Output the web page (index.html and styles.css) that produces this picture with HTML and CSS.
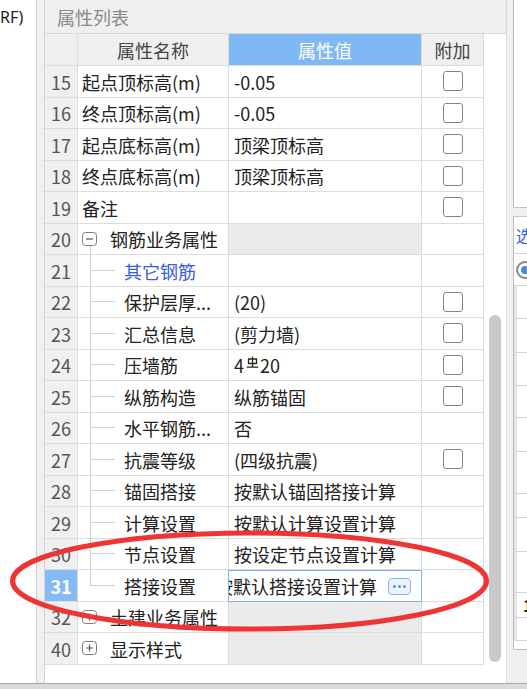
FILE: index.html
```html
<!DOCTYPE html>
<html lang="zh-CN">
<head>
<meta charset="utf-8">
<title>属性列表</title>
<link rel="stylesheet" href="styles.css">
</head>
<body>
<div class="screen">
  <div class="main">
    <div class="left-strip"><span class="rf">RF)</span></div>
    <div class="gutter"></div>
    <div class="panel">
      <div class="panel-title">属性列表</div>
      <div class="panel-body">
        <div class="grid">
          <div class="c num hd"></div>
          <div class="c hd">属性名称</div>
          <div class="c hd hd-val">属性值</div>
          <div class="c hd">附加</div>

          <div class="c num">15</div><div class="c name">起点顶标高(m)</div><div class="c val">-0.05</div><div class="c att"><span class="cb"></span></div>
          <div class="c num">16</div><div class="c name">终点顶标高(m)</div><div class="c val">-0.05</div><div class="c att"><span class="cb"></span></div>
          <div class="c num">17</div><div class="c name">起点底标高(m)</div><div class="c val">顶梁顶标高</div><div class="c att"><span class="cb"></span></div>
          <div class="c num">18</div><div class="c name">终点底标高(m)</div><div class="c val">顶梁顶标高</div><div class="c att"><span class="cb"></span></div>
          <div class="c num">19</div><div class="c name">备注</div><div class="c val"></div><div class="c att"><span class="cb"></span></div>

          <div class="c num">20</div>
          <div class="c name group open"><svg class="tog" width="16" height="15" viewBox="0 0 16 15"><rect x="0.5" y="0.5" width="14" height="13" rx="3" fill="#fff" stroke="#7c7c7c"/><path d="M4 7H11" stroke="#555" stroke-width="1.2"/></svg><span class="gtxt">钢筋业务属性</span></div>
          <div class="c val grey"></div><div class="c att"></div>

          <div class="c num">21</div><div class="c name child"><span class="blue">其它钢筋</span></div><div class="c val"></div><div class="c att"></div>
          <div class="c num">22</div><div class="c name child">保护层厚...</div><div class="c val">(20)</div><div class="c att"><span class="cb"></span></div>
          <div class="c num">23</div><div class="c name child">汇总信息</div><div class="c val">(剪力墙)</div><div class="c att"><span class="cb"></span></div>
          <div class="c num">24</div><div class="c name child">压墙筋</div><div class="c val">4<svg class="rebar" width="13" height="13" viewBox="0 0 13 13"><path d="M6.5 0.5V10.5M2.5 3H10.5V7.5H2.5ZM0.8 11.2H12.2" fill="none" stroke="#222" stroke-width="1.3"/></svg>20</div><div class="c att"><span class="cb"></span></div>
          <div class="c num">25</div><div class="c name child">纵筋构造</div><div class="c val">纵筋锚固</div><div class="c att"><span class="cb"></span></div>
          <div class="c num">26</div><div class="c name child">水平钢筋...</div><div class="c val">否</div><div class="c att"></div>
          <div class="c num">27</div><div class="c name child">抗震等级</div><div class="c val">(四级抗震)</div><div class="c att"><span class="cb"></span></div>
          <div class="c num">28</div><div class="c name child">锚固搭接</div><div class="c val">按默认锚固搭接计算</div><div class="c att"></div>
          <div class="c num">29</div><div class="c name child">计算设置</div><div class="c val">按默认计算设置计算</div><div class="c att"></div>
          <div class="c num">30</div><div class="c name child">节点设置</div><div class="c val">按设定节点设置计算</div><div class="c att"></div>
          <div class="c num sel">31</div><div class="c name child last">搭接设置</div>
          <div class="c val edit"><span class="edit-text">按默认搭接设置计算</span><span class="dots"><i></i><i></i><i></i></span></div><div class="c att"></div>

          <div class="c num">32</div>
          <div class="c name group"><svg class="tog" width="16" height="15" viewBox="0 0 16 15"><rect x="0.5" y="0.5" width="14" height="13" rx="3" fill="#fff" stroke="#7c7c7c"/><path d="M4 7H11M7.5 3.5V10.5" stroke="#555" stroke-width="1.2"/></svg><span class="gtxt">土建业务属性</span></div>
          <div class="c val grey"></div><div class="c att"></div>

          <div class="c num">40</div>
          <div class="c name group"><svg class="tog" width="16" height="15" viewBox="0 0 16 15"><rect x="0.5" y="0.5" width="14" height="13" rx="3" fill="#fff" stroke="#7c7c7c"/><path d="M4 7H11M7.5 3.5V10.5" stroke="#555" stroke-width="1.2"/></svg><span class="gtxt">显示样式</span></div>
          <div class="c val grey"></div><div class="c att"></div>
        </div>
        <div class="vscroll"><div class="thumb"></div></div>
      </div>
    </div>
    <div class="right-strip">
      <div class="rs-gap"></div>
      <div class="rs-col">
        <div class="rs-top"></div>
        <div class="rs-sep"></div>
        <div class="rs-box">
          <div class="rs-tab"><span class="rs-blue">选</span></div>
          <div class="rs-icon"><span class="rs-circle"></span></div>
          <div class="rs-row h33"></div>
          <div class="rs-row h34"><span class="rs-o">·</span></div>
          <div class="rs-row h33"><span class="rs-o">·</span></div>
          <div class="rs-row h32"></div>
          <div class="rs-row h34"><span class="rs-o">·</span></div>
          <div class="rs-row h42"><span class="rs-o">·</span></div>
          <div class="rs-row h24"><span class="rs-o">·</span></div>
          <div class="rs-row h34"><span class="rs-o">·</span></div>
          <div class="rs-row h41"><span class="rs-o">·</span></div>
          <div class="rs-row h25"><span class="rs-k">1</span></div>
          <div class="rs-row h23"><span class="rs-k">·</span></div>
        </div>
      </div>
    </div>
  </div>
  <div class="bottom-bar"></div>
</div>
<svg class="annot" width="527" height="689" viewBox="0 0 527 689"><ellipse cx="249.5" cy="581" rx="237" ry="48" fill="none" stroke="#ef3434" stroke-width="5"/></svg>
</body>
</html>
```

FILE: styles.css
```css
* { box-sizing: border-box; }
html, body { margin: 0; padding: 0; }
body {
  width: 527px;
  height: 689px;
  overflow: hidden;
  position: relative;
  background: #f0f0f0;
  font-family: "Noto Sans CJK SC", "Noto Sans", sans-serif;
}
.screen { display: flex; flex-direction: column; height: 689px; }
.main { display: flex; height: 683px; }
.bottom-bar { height: 6px; border-top: 1px solid #a9a9a9; background: #dadada; }

.left-strip {
  width: 37px;
  background: #fff;
  border-right: 1px solid #cdcdcd;
  padding-top: 6px;
  font-family: "Noto Sans", sans-serif;
  font-size: 16px;
  color: #222;
  overflow: hidden;
}
.gutter { width: 7px; background: #f0f0f0; }

.panel {
  width: 463px;
  border-left: 1px solid #d2d2d2;
  border-right: 1px solid #d8d8d8;
  display: flex;
  flex-direction: column;
  background: #fff;
}
.panel-title {
  height: 34px;
  flex: none;
  background: #efefef;
  border-bottom: 1px solid #d9d9d9;
  padding-left: 12px;
  color: #8a8a8a;
  font-size: 18px;
  display: flex;
  align-items: center;
}
.panel-body { flex: 1; display: flex; }

.grid {
  width: 439px;
  display: grid;
  grid-template-columns: 33px 151px 193px 62px;
  grid-template-rows: 32px;
  grid-auto-rows: 31.5px;
  align-content: start;
}
.c {
  border-right: 1px solid #dcdcdc;
  border-bottom: 1px solid #dcdcdc;
  display: flex;
  align-items: center;
  font-size: 18px;
  color: #222;
  white-space: nowrap;
  overflow: hidden;
  padding-top: 1px;
}
.num { background: #f0f0f0; justify-content: center; color: #555; }
.num.sel { background: #84bbf5; color: #fff; font-weight: 700; }
.hd { background: #efefef; justify-content: center; color: #444; }
.hd-val { background: #80b8f4; color: #fff; }
.name { padding-left: 4px; }
.val { padding-left: 5px; }
.val.grey { background: #ebebeb; }
.att { justify-content: center; padding-top: 0; }
.cb {
  width: 20px;
  height: 20px;
  border: 1px solid #858585;
  border-radius: 3px;
  background: #fff;
}
.blue { color: #3a5be0; }

.group { padding-left: 4px; }
.group.open {
  background: linear-gradient(#cfcfcf, #cfcfcf) 12px 100% / 1px 9px no-repeat;
}
.tog { flex: none; }
.gtxt { margin-left: 12px; }

.child {
  padding-left: 46px;
  background:
    linear-gradient(#d0d0d0, #d0d0d0) 12px 0 / 1px 100% no-repeat,
    linear-gradient(#d0d0d0, #d0d0d0) 12px 50% / 25px 1px no-repeat;
}
.child.last {
  background:
    linear-gradient(#d0d0d0, #d0d0d0) 12px 0 / 1px 50% no-repeat,
    linear-gradient(#d0d0d0, #d0d0d0) 12px 50% / 25px 1px no-repeat;
}

.rebar { margin: 0 1px 5px 2px; }

.edit {
  border: 1.5px solid #7cb1ee;
  margin-left: -1px;
  padding-left: 0;
}
.edit-text { flex: none; margin-left: -14px; }
.dots {
  flex: none;
  margin-left: 11px;
  width: 23px;
  height: 17px;
  border: 1.5px solid #8ab6ea;
  border-radius: 4px;
  background: #eaf2fc;
  display: flex;
  align-items: center;
  justify-content: center;
  gap: 2px;
}
.dots i {
  display: block;
  width: 3px;
  height: 3px;
  border-radius: 50%;
  background: #5a8fd8;
}

.vscroll { width: 22px; padding: 281px 0 0 5px; }
.thumb { width: 12px; height: 347px; border-radius: 6px; background: #c9c9c9; }

.right-strip { width: 20px; display: flex; }
.rs-gap { width: 6px; background: #f0f0f0; }
.rs-col { width: 14px; display: flex; flex-direction: column; }
.rs-top { height: 208px; background: #fff; border-left: 1px solid #bdbdbd; border-bottom: 1px solid #c4c4c4; }
.rs-sep { height: 8px; }
.rs-box {
  height: 434px;
  border-left: 1px solid #bcbcbc;
  border-top: 1px solid #c8c8c8;
  border-bottom: 1px solid #bcbcbc;
  background: #fff;
  display: flex;
  flex-direction: column;
  overflow: hidden;
}
.rs-tab { height: 37px; border-bottom: 1px solid #d6d6d6; padding-left: 2px; display: flex; align-items: center; }
.rs-blue { color: #2d5fe0; font-size: 16px; }
.rs-icon { height: 32px; border-bottom: 1px solid #d6d6d6; display: flex; align-items: center; padding-left: 2px; }
.rs-circle { width: 18px; height: 18px; flex: none; border-radius: 50%; border: 2px solid #8a8a8a; background: #fff; box-shadow: inset 0 0 0 3px #fff, inset 0 0 0 9px #4a8ae0; }
.rs-row {
  border-bottom: 1px solid #d4d4d4;
  border-left: 3px solid #e4e4e4;
  display: flex;
  align-items: center;
  padding-left: 6px;
  font-size: 16px;
}
.h23 { height: 23px; } .h24 { height: 24px; } .h25 { height: 25px; }
.h32 { height: 32px; } .h33 { height: 33px; } .h34 { height: 34px; }
.h41 { height: 41px; } .h42 { height: 42px; }
.rs-o { color: #e0a040; font-weight: 700; }
.rs-k { color: #222; font-weight: 700; }

.annot { position: absolute; left: 0; top: 0; pointer-events: none; }
```
